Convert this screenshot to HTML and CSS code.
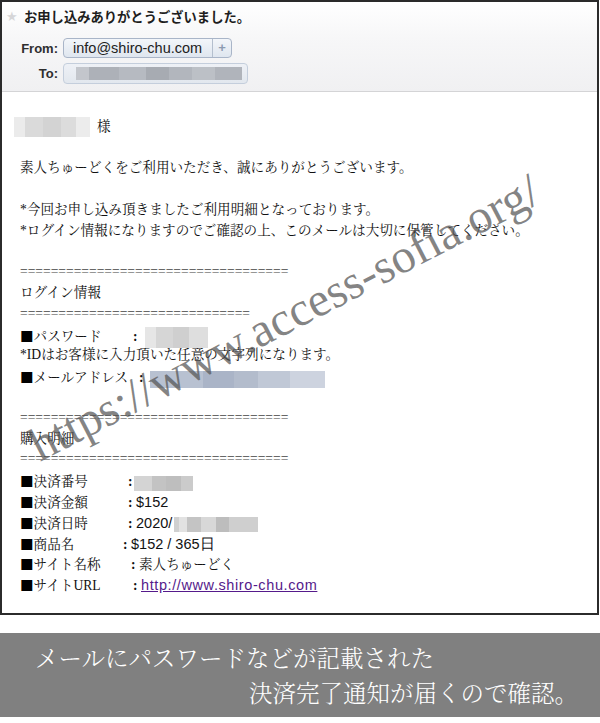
FILE: index.html
```html
<!DOCTYPE html>
<html lang="ja">
<head>
<meta charset="utf-8">
<title>お申し込みありがとうございました。</title>
<link rel="stylesheet" href="styles.css">
</head>
<body>
<div class="mail">
  <div class="head">
    <div class="subject"><span class="star">★</span><span class="subj">お申し込みありがとうございました。</span></div>
    <div class="hrow from"><span class="hlabel">From:</span><span class="token"><span class="addr">info@shiro-chu.com</span><span class="plus">+</span></span></div>
    <div class="hrow to"><span class="hlabel">To:</span><span class="token token-to"><span class="mosaic m-to"></span></span></div>
  </div>
  <div class="body">
    <div class="line"><span class="mosaic m-name"></span><span class="sama">様</span></div>
    <div class="blank"></div>
    <div class="line">素人ちゅーどくをご利用いただき、誠にありがとうございます。</div>
    <div class="blank"></div>
    <div class="line">*今回お申し込み頂きましたご利用明細となっております。</div>
    <div class="line">*ログイン情報になりますのでご確認の上、このメールは大切に保管してください。</div>
    <div class="blank"></div>
    <div class="line eq">===================================</div>
    <div class="line">ログイン情報</div>
    <div class="line eq">==============================</div>
    <div class="line"><span class="lbl w113"><span class="sq">■</span>パスワード</span><span class="colon">:</span><span class="mosaic m-pass"></span></div>
    <div class="line">*IDはお客様に入力頂いた任意の文字列になります。</div>
    <div class="line"><span class="lbl w119"><span class="sq">■</span>メールアドレス</span><span class="colon">:</span><span class="mosaic m-mail"></span></div>
    <div class="blank"></div>
    <div class="line eq">===================================</div>
    <div class="line">購入明細</div>
    <div class="line eq">===================================</div>
    <div class="line"><span class="lbl w108"><span class="sq">■</span>決済番号</span><span class="colon c-narrow">:</span><span class="mosaic m-num"></span></div>
    <div class="line"><span class="lbl w108"><span class="sq">■</span>決済金額</span><span class="colon">:</span><span class="val">$152</span></div>
    <div class="line"><span class="lbl w108"><span class="sq">■</span>決済日時</span><span class="colon">:</span><span class="val">2020/</span><span class="mosaic m-date"></span></div>
    <div class="line"><span class="lbl w103"><span class="sq">■</span>商品名</span><span class="colon">:</span><span class="val">$152 / 365日</span></div>
    <div class="line"><span class="lbl w111"><span class="sq">■</span>サイト名称</span><span class="colon">:</span>素人ちゅーどく</div>
    <div class="line"><span class="lbl w113"><span class="sq">■</span>サイトURL</span><span class="colon">:</span><a class="link" href="#">http://www.shiro-chu.com</a></div>
  </div>
  <div class="watermark">https://www.access-sofia.org/</div>
</div>
<div class="caption">
  <div class="cap1">メールにパスワードなどが記載された</div>
  <div class="cap2">決済完了通知が届くので確認。</div>
</div>
</body>
</html>
```

FILE: styles.css
```css
html, body {
  margin: 0;
  padding: 0;
  background: #fff;
}

body {
  width: 600px;
  height: 723px;
  overflow: hidden;
  font-family: "Liberation Serif", "Noto Serif CJK JP", "Noto Sans CJK JP", serif;
  color: #111;
}

.mail {
  position: relative;
  width: 599px;
  height: 615px;
  box-sizing: border-box;
  border: 2px solid #2b2b2b;
  overflow: hidden;
}

/* ---------- header ---------- */
.head {
  background: linear-gradient(#ffffff 0%, #f7f7f8 40%, #f0f0f2 100%);
  border-bottom: 1px solid #d4d4d6;
  padding: 5px 0 8px 0;
}

.subject {
  display: flex;
  align-items: center;
  height: 20px;
}

.star {
  margin-left: 4px;
  width: 14px;
  font-family: "DejaVu Sans", sans-serif;
  font-size: 13px;
  color: #d6d6d8;
  line-height: 20px;
}

.subj {
  margin-left: 4px;
  font-family: "Noto Sans CJK JP", sans-serif;
  font-weight: bold;
  font-size: 13.3px;
  color: #1e1e1e;
  line-height: 20px;
}

.hrow {
  display: flex;
  align-items: center;
  height: 20px;
}

.hrow.from {
  margin-top: 11px;
}

.hrow.to {
  margin-top: 5px;
}

.hlabel {
  width: 56px;
  margin-right: 5px;
  text-align: right;
  font-family: "Liberation Sans", Arial, sans-serif;
  font-weight: bold;
  font-size: 13px;
  color: #2e2e2e;
}

.token {
  display: flex;
  align-items: center;
  height: 20px;
  box-sizing: border-box;
  border: 1px solid #a9b5c8;
  border-radius: 4px;
  background: linear-gradient(#f3f6fa, #dfe6ef);
}

.addr {
  width: 148px;
  box-sizing: border-box;
  padding-left: 9px;
  font-family: "Liberation Sans", Arial, sans-serif;
  font-size: 14.5px;
  color: #222;
  line-height: 18px;
}

.plus {
  width: 19px;
  height: 18px;
  box-sizing: border-box;
  border-left: 1px solid #b4bfce;
  text-align: center;
  font-family: "Liberation Sans", Arial, sans-serif;
  font-weight: bold;
  font-size: 13px;
  line-height: 18px;
  color: #8c9bb1;
}

.token-to {
  width: 185px;
  height: 21px;
  border-color: #c4cedc;
  background: linear-gradient(#eef1f6, #e2e7ee);
}

/* ---------- mosaic (blurred) blocks ---------- */
.mosaic {
  display: inline-block;
  vertical-align: middle;
  filter: blur(0.6px);
}

.m-to {
  width: 166px;
  height: 13px;
  margin-left: 12px;
  background: linear-gradient(90deg,
    #c3c6cc 0 8%, #adb1b8 8% 26%, #b6bac1 26% 42%, #a7abb2 42% 56%,
    #b2b6bd 56% 70%, #bcc0c6 70% 84%, #b0b4bb 84% 100%);
}

.m-name {
  width: 76px;
  height: 20px;
  margin-left: -6px;
  background: linear-gradient(90deg,
    #ebebeb 0 14%, #dadada 14% 38%, #d3d3d3 38% 62%, #dcdcdc 62% 82%, #ececec 82% 100%);
}

.sama {
  margin-left: 7px;
}

.m-pass {
  width: 63px;
  height: 21px;
  margin-left: 4px;
  background: linear-gradient(90deg,
    #e6e6e6 0 18%, #d6d6d6 18% 45%, #cfcfcf 45% 70%, #dedede 70% 100%);
}

.m-mail {
  width: 175px;
  height: 17px;
  margin-left: 3px;
  background: linear-gradient(90deg,
    #b8c1d1 0 30%, #aab4c7 30% 48%, #b3bccc 48% 62%, #c0c8d6 62% 80%, #cdd3df 80% 100%);
}

.m-num {
  width: 59px;
  height: 15px;
  margin-left: 1px;
  background: linear-gradient(90deg,
    #d4d4d4 0 30%, #c3c3c3 30% 55%, #bebebe 55% 80%, #cbcbcb 80% 100%);
}

.m-date {
  width: 84px;
  height: 15px;
  margin-left: 2px;
  background: linear-gradient(90deg,
    #d0d0d0 0 6%, #e2e2e2 6% 16%, #c4c4c4 16% 32%, #d8d8d8 32% 50%, #bdbdbd 50% 66%, #cfcfcf 66% 100%);
}

/* ---------- body ---------- */
.body {
  padding: 24.6px 0 0 18px;
  font-size: 13.6px;
  line-height: 20.8px;
}

.line {
  height: 20.8px;
  white-space: nowrap;
}

.blank {
  height: 20.8px;
}

.eq {
  color: #444;
  font-family: "Liberation Serif", serif;
}

.lbl {
  display: inline-block;
}

.sq {
  font-family: "Noto Sans CJK JP", sans-serif;
  font-size: 13.6px;
  color: #000;
}

.w103 { width: 103px; }
.w108 { width: 108px; }
.w111 { width: 111px; }
.w113 { width: 113px; }
.w119 { width: 119px; }

.colon {
  display: inline-block;
  width: 8px;
  font-weight: bold;
}

.colon.c-narrow {
  width: 5px;
}

.val {
  font-family: "Liberation Sans", Arial, sans-serif;
  font-size: 14.5px;
}

.link {
  font-family: "Liberation Sans", Arial, sans-serif;
  font-size: 14.5px;
  letter-spacing: 0.6px;
  color: #551a8b;
  text-decoration: underline;
}

/* ---------- watermark overlay ---------- */
.watermark {
  position: absolute;
  left: 38px;
  top: 420px;
  font-family: "Liberation Serif", serif;
  font-size: 48px;
  line-height: 48px;
  white-space: nowrap;
  color: rgba(85, 85, 85, 0.72);
  transform-origin: 0 40px;
  transform: rotate(-27.4deg);
  pointer-events: none;
}

/* ---------- caption ---------- */
.caption {
  margin-top: 18px;
  height: 84px;
  box-sizing: border-box;
  background: #808080;
  color: #fff;
  font-family: "Noto Serif CJK JP", "Noto Sans CJK JP", serif;
  font-weight: 300;
  font-size: 23.5px;
  line-height: 35px;
  padding: 7px 22px 7px 35px;
}

.cap1 {
  text-align: left;
}

.cap2 {
  text-align: right;
}
```
